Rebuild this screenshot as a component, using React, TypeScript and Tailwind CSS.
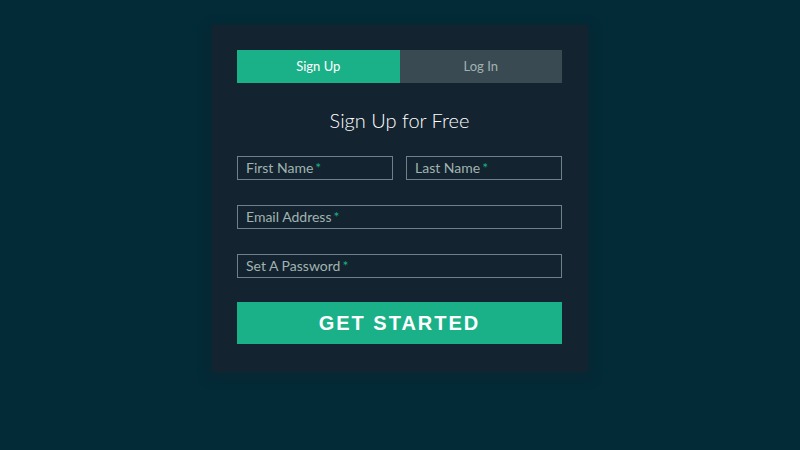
import React from "react"

const fieldCls =
  "flex h-6 items-center border border-[#6f8188] px-2 text-[14px] leading-none text-[#a0b3b0]"

function Field({ label }: { label: string }) {
  return (
    <div className={fieldCls}>
      <span>{label}</span>
      <span className="ml-[2px] text-[#1ab188]">*</span>
    </div>
  )
}

export default function App() {
  return (
    <div
      className="flex min-h-[450px] w-full justify-center bg-[#032a37] pt-[25px]"
      style={{ fontFamily: "Lato, 'Open Sans', sans-serif" }}
    >
      <div className="h-[347px] w-[376px] bg-[#13232f] pl-[25px] pr-[26px] pt-[25px] shadow-[0_4px_10px_4px_rgba(19,35,47,0.3)]">
        {/* tabs */}
        <div className="grid h-[33px] grid-cols-2 text-[13px]">
          <div className="flex items-center justify-center bg-[#1ab188] text-white">Sign Up</div>
          <div className="flex items-center justify-center bg-[#3a4a52] text-[#a0b3b0]">Log In</div>
        </div>

        <h1 className="mt-[22px] text-center text-[20px] font-light leading-[30px] text-white">
          Sign Up for Free
        </h1>

        <div className="mt-[21px] grid grid-cols-2 gap-[13px]">
          <Field label="First Name" />
          <Field label="Last Name" />
        </div>
        <div className="mt-[25px]">
          <Field label="Email Address" />
        </div>
        <div className="mt-[25px]">
          <Field label="Set A Password" />
        </div>

        <button
          className="mt-[24px] flex h-[42px] w-full items-center justify-center bg-[#1ab188] text-[20px] font-bold uppercase tracking-[0.1em] text-white"
          style={{ fontFamily: "'Liberation Sans', Arial, sans-serif" }}
        >
          Get Started
        </button>
      </div>
    </div>
  )
}
